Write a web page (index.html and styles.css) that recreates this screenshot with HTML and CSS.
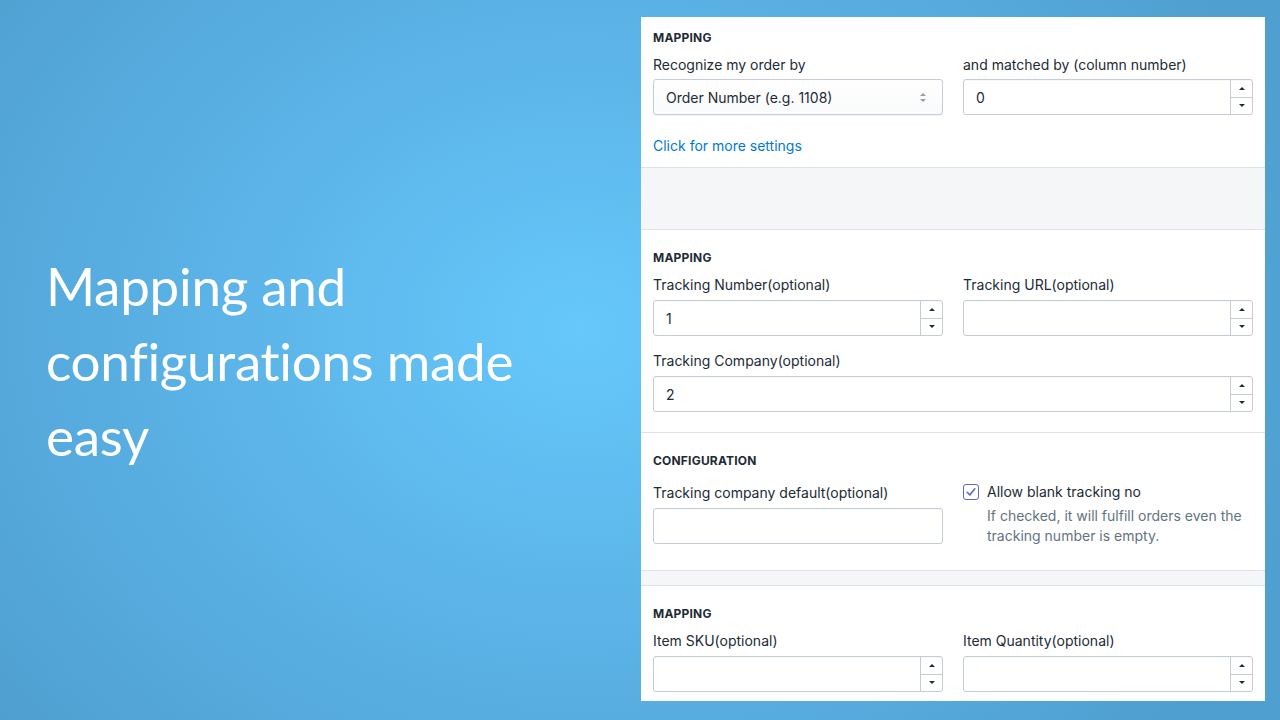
FILE: index.html
```html
<!DOCTYPE html>
<html>
<head>
  <meta charset="UTF-8">
  <title>Mapping and configurations</title>
  <link rel="stylesheet" href="styles.css">
</head>
<body>

  <div class="hero">
    <h1>Mapping and configurations made easy</h1>
  </div>

  <div class="panel">

    <!-- order mapping -->
    <div class="section first">
      <h3>Mapping</h3>
      <div class="row">
        <div class="col">
          <label>Recognize my order by</label>
          <div class="select">
            <span>Order Number (e.g. 1108)</span>
            <span class="updown"><i class="up"></i><i class="down"></i></span>
          </div>
        </div>
        <div class="col">
          <label>and matched by (column number)</label>
          <div class="num">
            <span class="val">0</span>
            <span class="spin"><b><i class="up"></i></b><b><i class="down"></i></b></span>
          </div>
        </div>
      </div>
      <a class="more" href="#">Click for more settings</a>
    </div>

    <div class="gap big"></div>

    <!-- tracking mapping -->
    <div class="section">
      <h3>Mapping</h3>
      <div class="row">
        <div class="col">
          <label>Tracking Number(optional)</label>
          <div class="num">
            <span class="val">1</span>
            <span class="spin"><b><i class="up"></i></b><b><i class="down"></i></b></span>
          </div>
        </div>
        <div class="col">
          <label>Tracking URL(optional)</label>
          <div class="num">
            <span class="val"></span>
            <span class="spin"><b><i class="up"></i></b><b><i class="down"></i></b></span>
          </div>
        </div>
      </div>
      <label class="next">Tracking Company(optional)</label>
      <div class="num">
        <span class="val">2</span>
        <span class="spin"><b><i class="up"></i></b><b><i class="down"></i></b></span>
      </div>
    </div>

    <!-- configuration -->
    <div class="section config">
      <h3>Configuration</h3>
      <div class="row">
        <div class="col">
          <label class="shift">Tracking company default(optional)</label>
          <div class="text"></div>
        </div>
        <div class="col">
          <div class="check">
            <span class="box">
              <svg width="12" height="12" viewBox="0 0 12 12"><path d="M2.2 6.3 L4.8 8.9 L9.8 2.8" fill="none" stroke="#5c6ac4" stroke-width="1.6" stroke-linecap="round" stroke-linejoin="round"/></svg>
            </span>
            <span>Allow blank tracking no</span>
          </div>
          <p class="help">If checked, it will fulfill orders even the tracking number is empty.</p>
        </div>
      </div>
    </div>

    <div class="gap small"></div>

    <!-- item mapping -->
    <div class="section last">
      <h3>Mapping</h3>
      <div class="row">
        <div class="col">
          <label>Item SKU(optional)</label>
          <div class="num">
            <span class="val"></span>
            <span class="spin"><b><i class="up"></i></b><b><i class="down"></i></b></span>
          </div>
        </div>
        <div class="col">
          <label>Item Quantity(optional)</label>
          <div class="num">
            <span class="val"></span>
            <span class="spin"><b><i class="up"></i></b><b><i class="down"></i></b></span>
          </div>
        </div>
      </div>
    </div>

  </div>

</body>
</html>
```

FILE: styles.css
```css
/* page */
body {
  margin: 0;
  width: 1280px;
  height: 720px;
  overflow: hidden;
  display: flex;
  align-items: flex-start;
  font-family: Inter, "Liberation Sans", sans-serif;
  color: #212b36;
  background: radial-gradient(ellipse 760px 620px at 580px 330px, #66c8fb 0%, #5cb4e8 45%, #4f9fd0 100%);
}

/* left title */
.hero {
  flex: 0 0 595px;
  height: 720px;
  padding-left: 46px;
  display: flex;
  align-items: center;
}

.hero h1 {
  margin: 0;
  max-width: 490px;
  font-family: Lato, "Open Sans", sans-serif;
  font-weight: 400;
  font-size: 53px;
  line-height: 75px;
  color: #fff;
  letter-spacing: -0.3px;
}

/* right card */
.panel {
  width: 624px;
  height: 684px;
  margin-top: 17px;
  background: #fff;
  overflow: hidden;
}

.section {
  padding: 20px 12px;
  background: #fff;
  border-bottom: 1px solid #dfe3e8;
}

.section.first {
  padding-top: 13px;
  padding-bottom: 11px;
}

.section.config {
  padding-bottom: 24px;
}

.section.last {
  border-bottom: none;
}

.gap {
  background: #f4f6f8;
  border-bottom: 1px solid #dfe3e8;
}
.gap.big { height: 61px; }
.gap.small { height: 14px; }

h3 {
  margin: 0 0 9px;
  font-size: 12px;
  line-height: 16px;
  font-weight: 700;
  text-transform: uppercase;
  letter-spacing: 0.2px;
}

.row {
  display: flex;
  gap: 20px;
}

.col {
  flex: 1;
  min-width: 0;
}

label {
  display: block;
  font-size: 14px;
  line-height: 20px;
  margin-bottom: 5px;
}

.first label {
  margin-bottom: 4px;
}

label.next {
  margin-top: 15px;
}

label.shift {
  margin-top: 5px;
}

/* inputs */
.select, .num, .text {
  box-sizing: border-box;
  height: 36px;
  border: 1px solid #c4cdd5;
  border-radius: 3px;
  box-shadow: inset 0 1px 0 0 rgba(99, 115, 129, 0.05);
  font-size: 14px;
  display: flex;
  align-items: center;
}

.select {
  padding: 0 12px;
  justify-content: space-between;
  background: linear-gradient(to bottom, #fff, #f9fafb);
  box-shadow: 0 1px 0 0 rgba(22, 29, 37, 0.05);
}

.updown {
  display: flex;
  flex-direction: column;
  gap: 3px;
  margin-right: 4px;
}

.updown i {
  width: 0;
  height: 0;
  border-left: 3px solid transparent;
  border-right: 3px solid transparent;
}
.updown .up { border-bottom: 3px solid #919eab; }
.updown .down { border-top: 3px solid #919eab; }

.num {
  background: #fff;
  align-items: stretch;
}

.num .val {
  flex: 1;
  padding: 0 12px;
  display: flex;
  align-items: center;
}

.spin {
  width: 21px;
  border-left: 1px solid #c4cdd5;
  display: flex;
  flex-direction: column;
}

.spin b {
  flex: 1;
  display: flex;
  align-items: center;
  justify-content: center;
}

.spin b + b {
  border-top: 1px solid #c4cdd5;
}

.spin i {
  width: 0;
  height: 0;
  border-left: 3px solid transparent;
  border-right: 3px solid transparent;
}
.spin .up { border-bottom: 3px solid #212b36; }
.spin .down { border-top: 3px solid #212b36; }

.more {
  display: block;
  margin-top: 21px;
  font-size: 14px;
  line-height: 20px;
  color: #007ace;
  text-decoration: none;
}

/* checkbox */
.check {
  display: flex;
  align-items: center;
  gap: 8px;
  margin-top: 4px;
  font-size: 14px;
  line-height: 20px;
}

.check .box {
  box-sizing: border-box;
  width: 16px;
  height: 16px;
  border: 1px solid #5c6ac4;
  border-radius: 3px;
  display: flex;
  align-items: center;
  justify-content: center;
  background: #fff;
}

.help {
  margin: 4px 0 0 24px;
  font-size: 14px;
  line-height: 20px;
  color: #637381;
}
```
